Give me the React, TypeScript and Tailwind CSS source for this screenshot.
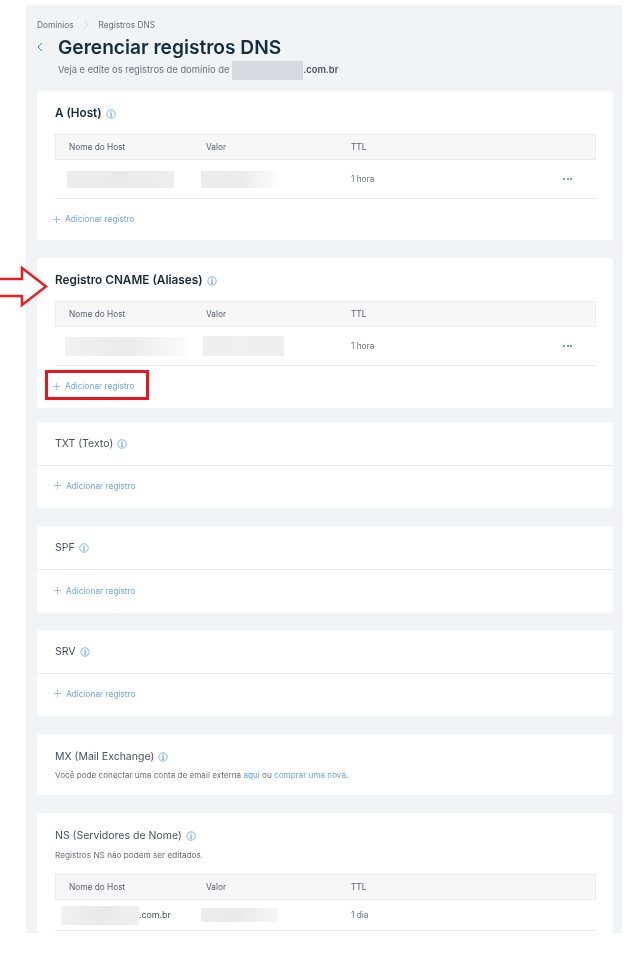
import React from "react";

const Info = () => (
  <svg width="10" height="10" viewBox="0 0 10 10" fill="none" className="shrink-0">
    <circle cx="5" cy="5" r="4.2" stroke="#5aa5ee" strokeWidth="0.8" />
    <path d="M4.2 4.3H5.2V7.3M4.2 7.3H6" stroke="#4a90e2" strokeWidth="0.8" />
    <circle cx="5" cy="2.9" r="0.55" fill="#4a90e2" />
  </svg>
);

const Blur = ({ w, h, className = "" }: { w: number; h: number; className?: string }) => (
  <div style={{ width: w, height: h }} className={`bg-gradient-to-r ${className}`} />
);

const Add = ({ className = "" }: { className?: string }) => (
  <div className={`flex items-center gap-[5px] text-[8.3px] leading-[12px] text-[#6aa5ec] ${className}`}>
    <svg width="7" height="7" viewBox="0 0 7 7" className="shrink-0">
      <path d="M3.5 0V7M0 3.5H7" stroke="#7fb2ee" strokeWidth="0.8" />
    </svg>
    <span>Adicionar registro</span>
  </div>
);

const Head = () => (
  <div className="flex h-[26px] items-center border border-[#e8ebef] bg-[#f7f7f8] text-[8.3px] text-[#55606e]">
    <span className="ml-[13px] w-[137px]">Nome do Host</span>
    <span className="w-[145px]">Valor</span>
    <span>TTL</span>
  </div>
);

const Row = ({ a, b, ttl, h, dots = true }: { a: React.ReactNode; b: React.ReactNode; ttl: string; h: string; dots?: boolean }) => (
  <div className={`flex items-center border-b border-[#e8ebef] text-[8.3px] text-[#6b7480] ${h}`}>
    <div className="w-[146px] shrink-0">{a}</div>
    <div className="w-[150px] shrink-0">{b}</div>
    <span className="flex-1">{ttl}</span>
    {dots && (
      <span className="mr-[24px] flex gap-[1.5px]">
        <i className="h-[2px] w-[2px] rounded-full bg-[#3b82e0]" />
        <i className="h-[2px] w-[2px] rounded-full bg-[#3b82e0]" />
        <i className="h-[2px] w-[2px] rounded-full bg-[#3b82e0]" />
      </span>
    )}
  </div>
);

const Card = ({ className, children }: { className: string; children: React.ReactNode }) => (
  <section className={`mx-[11px] w-[576px] shrink-0 rounded-[4px] bg-white ${className}`}>{children}</section>
);

const Simple = ({ title, cls, addCls, titleCls }: { title: string; cls: string; addCls: string; titleCls: string }) => (
  <Card className={cls}>
    <div className={`flex h-[43.5px] items-center gap-[4px] border-b border-[#e8ebef] pl-[18px] text-[10.5px] text-[#49525e] ${titleCls}`}>
      {title}
      <Info />
    </div>
    <Add className={addCls} />
  </Card>
);

export default function App() {
  return (
    <div
      className="relative h-[958px] w-[641px] overflow-hidden bg-white pt-[5px] blur-[0.3px]"
      style={{ fontFamily: "Inter, 'Noto Sans', sans-serif" }}
    >
      <div className="ml-[26px] flex h-[928px] w-[596px] flex-col overflow-hidden bg-[#f0f4f7]">
        <div className="flex h-[86px] shrink-0 flex-col pl-[11px]">
          <div className="mt-[14px] flex items-center text-[8.3px] leading-[12px] text-[#66707c]">
            <span>Domínios</span>
            <svg width="6" height="10" viewBox="0 0 6 10" fill="none" className="ml-[9px] mr-[10px]">
              <path d="M1 1L5 5L1 9" stroke="#c8ced5" strokeWidth="0.7" />
            </svg>
            <span>Registros DNS</span>
          </div>
          <div className="mt-[2px] flex items-center">
            <svg width="6" height="10" viewBox="0 0 6 10" fill="none">
              <path d="M5 1L1 5L5 9" stroke="#3b82e0" strokeWidth="1" />
            </svg>
            <h1 className="ml-[15px] text-[19.15px] font-semibold leading-[28px] text-[#162d3d]">
              Gerenciar registros DNS
            </h1>
          </div>
          <div className="ml-[21px] flex h-[18px] items-center text-[9.35px] text-[#66707c]">
            <span>Veja e edite os registros de domínio de</span>
            <span className="ml-[3px] h-[19px] w-[71px] bg-[#d5dae1]" />
            <span className="font-semibold text-[#48525e]">.com.br</span>
          </div>
        </div>

        <Card className="h-[149px]">
          <div className="flex h-[43px] items-center gap-[4px] pl-[18px] pt-[2px] text-[11.7px] font-semibold text-[#1a2a38]">
            A (Host)
            <Info />
          </div>
          <div className="ml-[18px] mr-[17px]">
            <Head />
            <Row
              h="h-[39px]"
              ttl="1 hora"
              a={<Blur w={107} h={17} className="ml-[12px] from-[#ececed] via-[#eaeaeb] to-[#eeeeef]" />}
              b={<Blur w={78} h={17} className="from-[#ececed] via-[#ebebec] to-[#fdfdfd]" />}
            />
          </div>
          <Add className="pl-[16px] pt-[14px]" />
        </Card>

        <Card className="mt-[18px] h-[150px]">
          <div className="flex h-[43px] items-center gap-[4px] pl-[18px] pt-[2px] text-[11.8px] font-semibold text-[#1a2a38]">
            Registro CNAME (Aliases)
            <Info />
          </div>
          <div className="ml-[18px] mr-[17px]">
            <Head />
            <Row
              h="h-[39px]"
              ttl="1 hora"
              a={<Blur w={122} h={19} className="ml-[10px] from-[#f1f1f2] via-[#ebebec] to-[#fbfbfb]" />}
              b={<Blur w={81} h={20} className="ml-[2px] from-[#eeeeef] via-[#f0f0f1] to-[#eeeeef]" />}
            />
          </div>
          <Add className="pl-[16px] pt-[14px]" />
        </Card>

        <Simple title="TXT (Texto)" cls="mt-[14px] h-[86px]" titleCls="pt-[2px]" addCls="pl-[17px] pt-[14px]" />
        <Simple title="SPF" cls="mt-[18px] h-[87px]" titleCls="pt-[1px]" addCls="pl-[17px] pt-[15px]" />
        <Simple title="SRV" cls="mt-[17px] h-[86px]" titleCls="pt-[2px]" addCls="pl-[17px] pt-[14px]" />

        <Card className="mt-[18px] h-[61px]">
          <div className="flex items-center gap-[4px] pl-[18px] pt-[15px] text-[10.5px] leading-[16px] text-[#49525e]">
            MX (Mail Exchange)
            <Info />
          </div>
          <p className="pl-[18px] pt-[4px] text-[8.15px] leading-[12px] text-[#66707c]">
            Você pode conectar uma conta de email externa <span className="text-[#5a9ee8]">aqui</span> ou{" "}
            <span className="text-[#6aa5ec]">comprar uma nova</span>.
          </p>
        </Card>

        <Card className="mt-[18px] flex-1">
          <div className="flex items-center gap-[4px] pl-[18px] pt-[15px] text-[10.5px] leading-[16px] text-[#49525e]">
            NS (Servidores de Nome)
            <Info />
          </div>
          <p className="pl-[18px] pt-[5px] text-[8.2px] leading-[12px] text-[#66707c]">Registros NS não podem ser editados.</p>
          <div className="ml-[18px] mr-[17px] mt-[13px]">
            <Head />
            <Row
              h="h-[31px]"
              ttl="1 dia"
              dots={false}
              a={
                <div className="flex items-center text-[8.8px] text-[#48525e]">
                  <Blur w={78} h={19} className="ml-[6px] from-[#f1f1f2] via-[#e9e9ea] to-[#f0f0f1]" />
                  <span>.com.br</span>
                </div>
              }
              b={<Blur w={77} h={14} className="from-[#ececed] via-[#eaeaeb] to-[#f5f5f6]" />}
            />
          </div>
        </Card>
      </div>

      {/* anotações sobre a captura */}
      <svg width="50" height="42" viewBox="0 0 50 42" fill="none" className="absolute left-0 top-[266px]">
        <path d="M0 13H22V2L46 20.5L22 39V30H0" stroke="#ea1c24" strokeWidth="2.5" fill="white" />
      </svg>
      <div className="absolute left-[45px] top-[370px] h-[30px] w-[104px] border-[3px] border-[#e8141f]" />
    </div>
  );
}
